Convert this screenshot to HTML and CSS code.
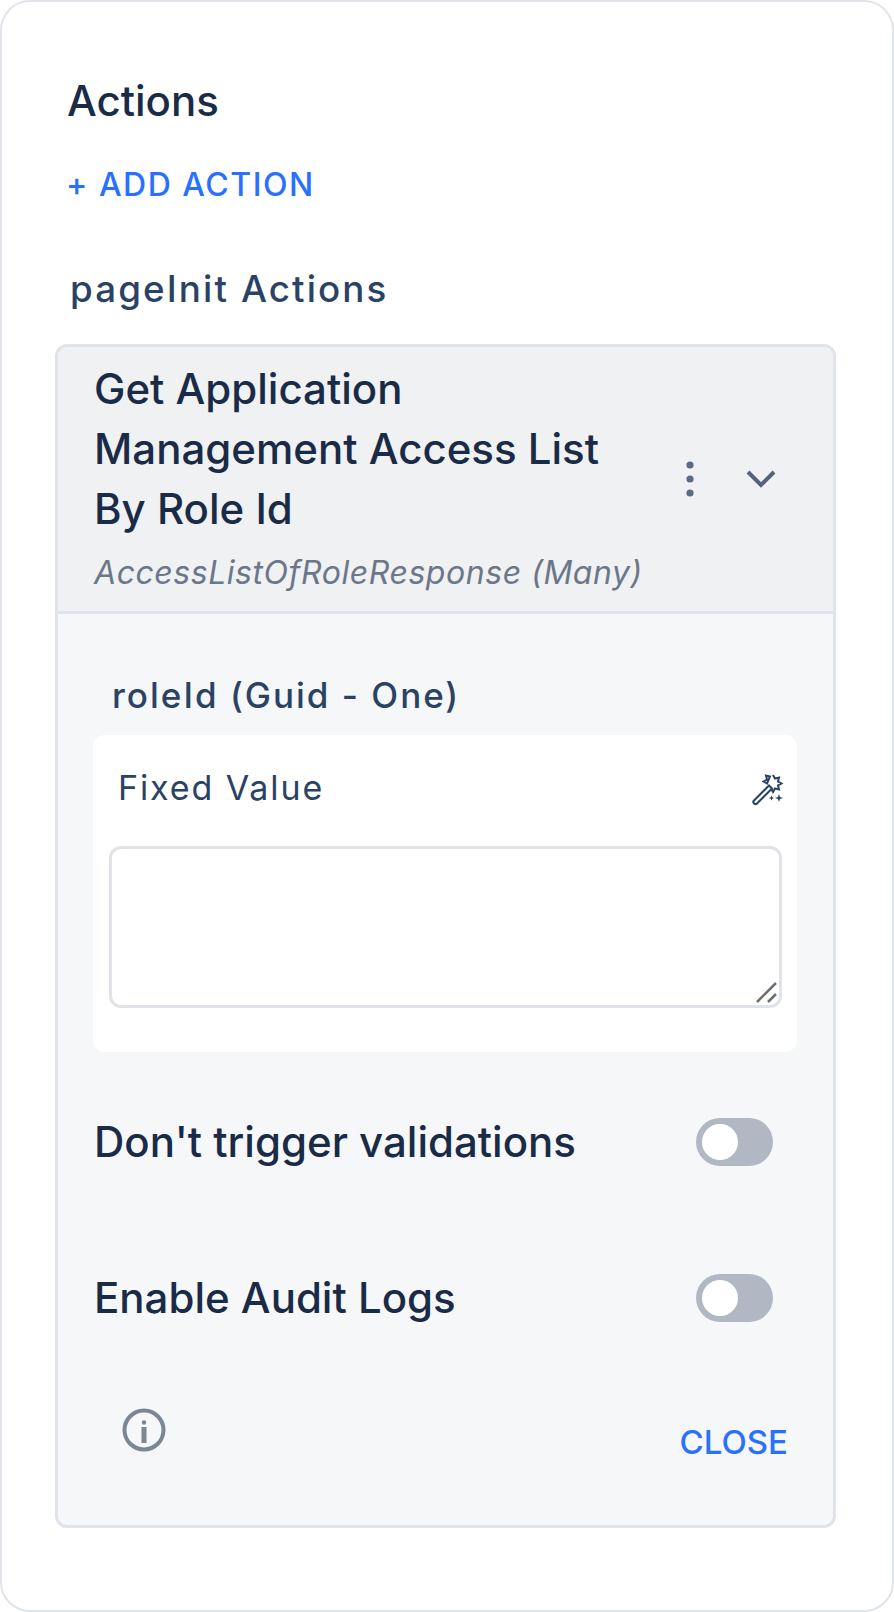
FILE: index.html
```html
<!DOCTYPE html>
<html lang="en">
<head>
<meta charset="utf-8">
<title>Actions</title>
<link rel="stylesheet" href="styles.css">
</head>
<body>
<main class="panel">
  <h1 class="panel-title">Actions</h1>
  <a class="add-action">+ ADD ACTION</a>
  <h2 class="group-title">pageInit Actions</h2>
  <section class="card">
    <header class="card-head">
      <div class="head-text">
        <div class="action-name">Get Application Management Access List By Role Id</div>
        <div class="action-type">AccessListOfRoleResponse (Many)</div>
      </div>
      <svg class="kebab" width="10" height="38" viewBox="0 0 10 38"><circle cx="5" cy="5" r="3.6"/><circle cx="5" cy="19" r="3.6"/><circle cx="5" cy="33" r="3.6"/></svg>
      <svg class="chevron" width="32" height="20" viewBox="0 0 32 20"><path d="M3 3l13 13L29 3"/></svg>
    </header>
    <div class="card-body">
      <div class="param-label">roleId (Guid - One)</div>
      <div class="value-box">
        <div class="value-head">
          <span class="value-label">Fixed Value</span>
          <svg class="wand" width="34" height="34" viewBox="0 0 34 34">
            <path class="wand-line" d="M3 28.5 18 13.5l3 3L6 31.500a2 2 0 0 1-3-3z"/>
            <path class="wand-line" d="M22 3l2 3.500 4-1-1 4 3.500 2-3.500 2 1 4-4-1-2 3.500-2-3.500M16 11.500l-3.500-2 3.500-2-1-4 4 1z"/>
            <path class="wand-fill" d="M28 22l1 3 3 1-3 1-1 3-1-3-3-1 3-1zM20.500 23.500l.8 1.700 1.700.8-1.700.8-.8 1.700-.8-1.700-1.700-.8 1.700-.8z"/>
          </svg>
        </div>
        <div class="textarea">
          <svg class="grip" width="24" height="24" viewBox="0 0 24 24"><path d="M2 21 21 2M13 21l8-8"/></svg>
        </div>
      </div>
      <div class="toggle-row">
        <span class="toggle-label">Don't trigger validations</span>
        <span class="toggle"><span class="knob"></span></span>
      </div>
      <div class="toggle-row">
        <span class="toggle-label">Enable Audit Logs</span>
        <span class="toggle"><span class="knob"></span></span>
      </div>
      <div class="card-foot">
        <svg class="info" width="44" height="44" viewBox="0 0 44 44"><circle cx="22" cy="22" r="19.500"/><circle class="dot" cx="22" cy="14.500" r="2.200"/><path class="stem" d="M22 19v16"/></svg>
        <a class="close">CLOSE</a>
      </div>
    </div>
  </section>
</main>
</body>
</html>
```
FILE: styles.css
```css
* { box-sizing: border-box; }
html, body { margin: 0; padding: 0; background: #fff; }
body { font-family: Inter, "Liberation Sans", sans-serif; }
.panel {
  width: 894px;
  height: 1612px;
  border: 2px solid #e1e4e9;
  border-radius: 30px;
  padding: 71px 55px 0 53px;
  background: #fff;
}
.panel-title {
  margin: 0 0 0 12px;
  font-size: 42px;
  line-height: 56px;
  font-weight: 500;
  color: #1a2b47;
}
.add-action {
  display: block;
  margin: 36px 0 0 11px;
  font-size: 32px;
  line-height: 40px;
  font-weight: 500;
  letter-spacing: 1.500px;
  color: #2970ff;
}
.group-title {
  margin: 59px 0 0 15px;
  font-size: 36.750px;
  line-height: 50px;
  font-weight: 500;
  letter-spacing: 2.100px;
  color: #2a4365;
}
.card {
  margin-top: 30px;
  width: 781px;
  height: 1184px;
  border: 3px solid #e1e3ea;
  border-radius: 12px;
  background: #f6f7f9;
  overflow: hidden;
}
.card-head {
  display: flex;
  align-items: center;
  height: 267px;
  border-bottom: 3px solid #e1e3ea;
  background: #f0f1f3;
  padding-left: 36px;
}
.head-text { width: 548px; align-self: flex-start; padding-top: 12px; }
.action-name {
  font-size: 42px;
  line-height: 60px;
  font-weight: 500;
  color: #1a2b47;
}
.action-type {
  margin-top: 13px;
  font-size: 32px;
  line-height: 42px;
  font-style: italic;
  letter-spacing: 0.550px;
  white-space: nowrap;
  color: #6b7789;
}
.kebab { fill: #5b6b85; margin-left: 43px; flex: none; }
.chevron { fill: none; stroke: #54647c; stroke-width: 4px; margin-left: 50px; flex: none; }
.card-body { padding: 0 35px 0 35px; }
.param-label {
  margin: 59px 0 0 19px;
  font-size: 35px;
  line-height: 44px;
  font-weight: 500;
  letter-spacing: 2px;
  color: #2a4365;
}
.value-box {
  margin-top: 18px;
  width: 704px;
  height: 317px;
  background: #fff;
  border-radius: 12px;
  padding: 0 15px 0 16px;
}
.value-head {
  display: flex;
  justify-content: space-between;
  align-items: flex-start;
  height: 111px;
  padding: 31px 0 0 9px;
}
.value-label {
  font-size: 34px;
  line-height: 44px;
  letter-spacing: 1.900px;
  color: #2a4365;
}
.wand { margin: 6px -3px 0 0; }
.wand-line { fill: none; stroke: #2a4365; stroke-width: 2px; }
.wand-fill { fill: #2a4365; }
.textarea {
  position: relative;
  width: 673px;
  height: 162px;
  border: 3px solid #e1e3ea;
  border-radius: 12px;
  background: #fff;
}
.grip { position: absolute; right: 0; bottom: 0; fill: none; stroke: #6f6f6f; stroke-width: 2.500px; }
.toggle-row {
  display: flex;
  justify-content: space-between;
  align-items: center;
  height: 48px;
  padding: 0 25px 0 1px;
  margin-top: 66px;
}
.toggle-row + .toggle-row { margin-top: 108px; }
.toggle-label {
  font-size: 42px;
  line-height: 48px;
  font-weight: 500;
  color: #1a2b47;
}
.toggle {
  display: flex;
  align-items: center;
  width: 77px;
  height: 48px;
  padding-left: 6px;
  border-radius: 24px;
  background: #b1b8c3;
}
.knob { width: 36px; height: 36px; border-radius: 50%; background: #fff; }
.card-foot {
  display: flex;
  justify-content: space-between;
  align-items: flex-start;
  margin-top: 86px;
  padding: 0 10px 0 29px;
}
.info { fill: none; stroke: #7b8794; stroke-width: 4px; }
.info .dot { fill: #7b8794; stroke: none; }
.info .stem { stroke-width: 5px; }
.close {
  margin-top: 14px;
  font-size: 33px;
  line-height: 40px;
  font-weight: 500;
  color: #2970ff;
}
```
